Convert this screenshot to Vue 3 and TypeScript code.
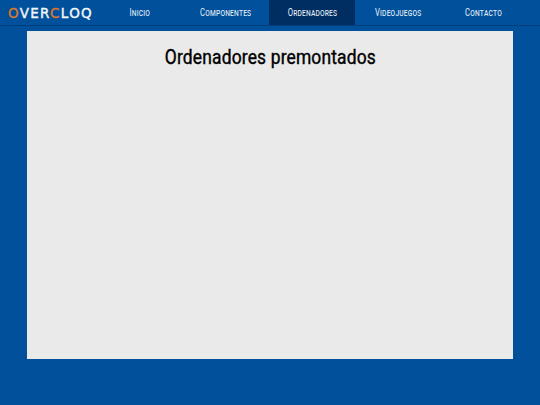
<script setup lang="ts">
const links: string[] = ['Inicio', 'Componentes', 'Ordenadores', 'Videojuegos', 'Contacto']
const active = 'Ordenadores'
</script>

<template>
  <div class="page">
    <header class="bar">
      <div class="logo"><span class="orange">O</span>VER<span class="orange">C</span>LOQ</div>
      <nav class="nav">
        <a v-for="l in links" :key="l" class="link" :class="{ on: l === active }"><span class="label">{{ l }}</span></a>
      </nav>
    </header>
    <main class="card">
      <h1 class="title"><span class="title-text">Ordenadores premontados</span></h1>
    </main>
  </div>
</template>

<style>
html, body { margin: 0; background: #00509b; }
</style>

<style scoped>
.page {
  width: 540px;
  height: 405px;
  background: #00509b;
  overflow: hidden;
  font-family: "Roboto", sans-serif;
}
.bar {
  height: 25px;
  border-bottom: 1px solid #003f7c;
  display: flex;
  align-items: stretch;
}
.logo {
  width: 89px;
  margin-left: 8px;
  font-family: "DejaVu Sans", sans-serif;
  font-size: 13.5px;
  font-weight: 400;
  -webkit-text-stroke: 0.4px currentColor;
  letter-spacing: 1.3px;
  line-height: 26px;
  color: #f2f5f8;
  white-space: nowrap;
}
.orange { color: #d9772f; }
.nav { display: flex; }
.link {
  width: 86px;
  display: flex;
  align-items: center;
  justify-content: center;
  font-variant: small-caps;
  font-size: 11px;
  letter-spacing: 0.3px;
  color: #e8f0f8;
}
.label {
  display: inline-block;
  transform: scaleX(0.7);
  white-space: nowrap;
}
.on { background: #002d62; }
.card {
  width: 486px;
  height: 328px;
  margin: 5px 0 0 27px;
  background: #eaeaea;
}
.title {
  margin: 0;
  padding-top: 13px;
  text-align: center;
  font-size: 20px;
  font-weight: 400;
  -webkit-text-stroke: 0.4px currentColor;
  letter-spacing: 0.2px;
  line-height: 26px;
  color: #000;
}
.title-text {
  display: inline-block;
  transform: scaleX(0.87);
  white-space: nowrap;
}
</style>
